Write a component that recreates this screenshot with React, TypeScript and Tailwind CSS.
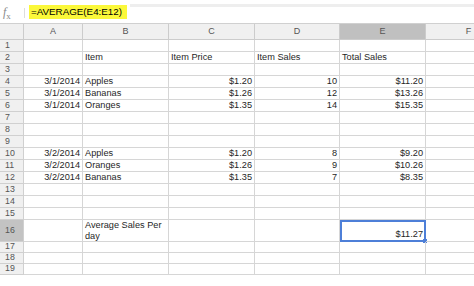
import React from "react";

const colW = [24, 59, 86, 86, 85, 86, 86];
const headers = ["", "A", "B", "C", "D", "E", "F"];

type Cell = { t: string; r?: boolean };
type Row = { n: number; h: number; cells: (Cell | null)[] };

const C = (t: string, r = false): Cell => ({ t, r });

const rows: Row[] = [
  { n: 1, h: 12, cells: [] },
  { n: 2, h: 12, cells: [null, C("Item"), C("Item Price"), C("Item Sales"), C("Total Sales")] },
  { n: 3, h: 12, cells: [] },
  { n: 4, h: 12, cells: [C("3/1/2014", true), C("Apples"), C("$1.20", true), C("10", true), C("$11.20", true)] },
  { n: 5, h: 12, cells: [C("3/1/2014", true), C("Bananas"), C("$1.26", true), C("12", true), C("$13.26", true)] },
  { n: 6, h: 12, cells: [C("3/1/2014", true), C("Oranges"), C("$1.35", true), C("14", true), C("$15.35", true)] },
  { n: 7, h: 12, cells: [] },
  { n: 8, h: 12, cells: [] },
  { n: 9, h: 12, cells: [] },
  { n: 10, h: 12, cells: [C("3/2/2014", true), C("Apples"), C("$1.20", true), C("8", true), C("$9.20", true)] },
  { n: 11, h: 12, cells: [C("3/2/2014", true), C("Oranges"), C("$1.26", true), C("9", true), C("$10.26", true)] },
  { n: 12, h: 12, cells: [C("3/2/2014", true), C("Bananas"), C("$1.35", true), C("7", true), C("$8.35", true)] },
  { n: 13, h: 12, cells: [] },
  { n: 14, h: 12, cells: [] },
  { n: 15, h: 12, cells: [] },
  { n: 16, h: 22, cells: [] },
  { n: 17, h: 11, cells: [] },
  { n: 18, h: 11, cells: [] },
  { n: 19, h: 11, cells: [] },
];

export default function App() {
  return (
    <div className="w-[474px] h-[286px] bg-white overflow-hidden font-['Liberation_Sans',Arial,sans-serif] text-[#1f1f1f]">
      {/* formula bar */}
      <div className="relative h-[23px] flex items-center">
        <div className="absolute left-[130px] right-0 top-[4px] h-[3px] bg-[#eeeeee]" />
        <div className="w-[24px] pl-[3px] pt-[5px] text-[#8a8a8a] font-['Liberation_Serif',serif] italic text-[12px] leading-none">
          f<span className="text-[9px] not-italic align-sub">x</span>
        </div>
        <div className="w-px h-[10px] bg-[#dddddd] mt-[3px]" />
        <div className="ml-[4px] mt-[1px] bg-[#fbf83a] h-[14px] w-[98px] flex items-center pl-[2px] text-[9.8px] text-black leading-none">
          =AVERAGE(E4:E12)
        </div>
      </div>

      {/* header row */}
      <div className="flex h-[17px] border-t border-[#d0d0d0]">
        {headers.map((h, i) => (
          <div
            key={i}
            style={{ width: colW[i], minWidth: colW[i] }}
            className={
              "h-full flex items-center justify-center text-[9px] text-[#555] border-r border-b border-[#cccccc] " +
              (i === 5 ? "bg-[#c0c0c0]" : "bg-[#f0f0f0]")
            }
          >
            {h}
          </div>
        ))}
      </div>

      {rows.map((row) => (
        <div key={row.n} className="flex" style={{ height: row.h }}>
          <div
            style={{ width: colW[0], minWidth: colW[0] }}
            className={
              "h-full flex items-center pl-[5px] text-[8.8px] text-[#555] border-r border-b border-[#d0d0d0] " +
              (row.n === 16 ? "bg-[#c3c3c3]" : "bg-[#f0f0f0]")
            }
          >
            {row.n}
          </div>
          {colW.slice(1).map((w, ci) => {
            const cell = row.cells[ci];
            const isSel = row.n === 16 && ci === 4;
            const isAvg = row.n === 16 && ci === 1;
            return (
              <div
                key={ci}
                style={{ width: w, minWidth: w }}
                className={
                  "relative h-full flex text-[9.2px] leading-[11px] px-[2px] " +
                  (isSel
                    ? "border-2 border-[#4d7fd8] items-end justify-end pr-[1px]"
                    : "border-r border-b border-[#d6d6d6] items-center " + (cell?.r ? "justify-end" : "justify-start"))
                }
              >
                {isAvg ? (
                  <div className="self-start leading-[11px]">
                    Average Sales Per
                    <br />
                    day
                  </div>
                ) : isSel ? (
                  <>
                    <span>$11.27</span>
                    <div className="absolute -right-[3px] -bottom-[3px] w-[4px] h-[4px] bg-[#4d7fd8]" />
                  </>
                ) : (
                  cell?.t
                )}
              </div>
            );
          })}
        </div>
      ))}
    </div>
  );
}
